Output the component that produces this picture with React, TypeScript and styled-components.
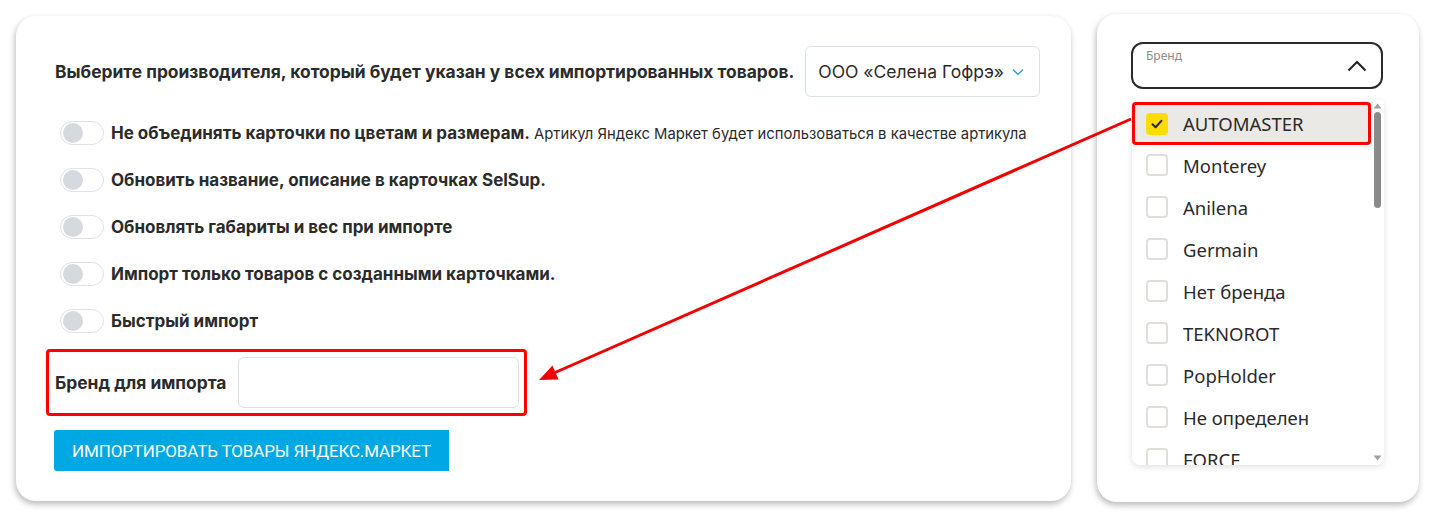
import React from 'react';
import styled, { createGlobalStyle } from 'styled-components';

const GlobalStyle = createGlobalStyle`
  html, body {
    margin: 0;
    padding: 0;
    background: #ffffff;
  }
  body {
    font-family: Inter, Roboto, "Liberation Sans", sans-serif;
    color: #222;
  }
`;

const Page = styled.div`
  position: relative;
  display: flex;
  align-items: flex-start;
  gap: 26px;
  padding: 16px 0 0 16px;
  width: 1439px;
  height: 523px;
  box-sizing: border-box;
`;

const Card = styled.div`
  background: #fff;
  border-radius: 20px;
  box-shadow: -1px 3px 6px rgba(0, 0, 0, 0.28);
  box-sizing: border-box;
`;

const ImportCard = styled(Card)`
  width: 1055px;
  height: 485px;
  padding: 30px 0 0 39px;
  display: flex;
  flex-direction: column;
`;

const BrandCard = styled(Card)`
  margin-top: -2px;
  width: 322px;
  height: 488px;
  padding: 28px 36px 0 34px;
  display: flex;
  flex-direction: column;
`;

const TitleRow = styled.div`
  display: flex;
  align-items: center;
  gap: 11px;
`;

const Title = styled.span`
  font-size: 17.4px;
  font-weight: 700;
  color: #2b2b2b;
  white-space: nowrap;
`;

const MakerSelect = styled.div`
  width: 235px;
  height: 51px;
  box-sizing: border-box;
  border: 1px solid #dce1e5;
  border-radius: 6px;
  display: flex;
  align-items: center;
  gap: 8px;
  padding: 0 12px;
  font-size: 17.5px;
  color: #2b2b2b;
  white-space: nowrap;
`;

const Options = styled.div`
  display: flex;
  flex-direction: column;
  gap: 23px;
  margin-top: 24px;
  padding-left: 5px;
`;

const OptionRow = styled.label`
  display: flex;
  align-items: center;
  gap: 7px;
  height: 24px;
`;

const Toggle = styled.span`
  position: relative;
  width: 44px;
  height: 24px;
  box-sizing: border-box;
  border: 1px solid #dfe3e7;
  border-radius: 12px;
  background: #fff;
  flex-shrink: 0;

  &::after {
    content: '';
    position: absolute;
    left: 2px;
    top: 1px;
    width: 20px;
    height: 20px;
    border-radius: 50%;
    background: #d6dadf;
  }
`;

const OptionText = styled.span<{ $size?: number }>`
  font-size: ${({ $size }) => $size ?? 17}px;
  font-weight: 700;
  color: #2b2b2b;
  white-space: nowrap;
`;

const OptionNote = styled.span`
  font-size: 14.8px;
  font-weight: 400;
  color: #2b2b2b;
  margin-left: 4px;
`;

const Highlight = styled.div`
  border: 3px solid #ff0000;
  border-radius: 4px;
  box-sizing: border-box;
`;

const BrandRow = styled(Highlight)`
  margin: 16px 0 0 -9px;
  width: 481px;
  height: 67px;
  display: flex;
  align-items: center;
  justify-content: space-between;
  padding: 0 5px 0 6px;
`;

const BrandInput = styled.div`
  width: 281px;
  height: 51px;
  box-sizing: border-box;
  border: 1px solid #dce1e5;
  border-radius: 6px;
`;

const ImportButton = styled.button`
  margin: 14px 0 0 -1px;
  width: 395px;
  height: 41px;
  border: none;
  border-radius: 3px 0 0 3px;
  background: #00a8e3;
  color: #fff;
  font-family: Roboto, "Liberation Sans", sans-serif;
  font-size: 17px;
  letter-spacing: -0.15px;
  text-transform: uppercase;
`;

const BrandSelect = styled.div`
  position: relative;
  height: 47px;
  box-sizing: border-box;
  border: 2px solid #2a2a2a;
  border-radius: 12px;
  font-family: "Noto Sans", sans-serif;
`;

const FloatingLabel = styled.span`
  position: absolute;
  left: 13px;
  top: 3px;
  font-size: 12px;
  color: #8c8c8c;
`;

const ChevronUp = styled.svg`
  position: absolute;
  right: 14px;
  top: 16px;
`;

const Dropdown = styled.div`
  margin: 11px -1px 0 1px;
  height: 365px;
  display: flex;
  background: #fff;
  border-radius: 0 0 8px 8px;
  box-shadow: 0 2px 6px rgba(0, 0, 0, 0.12);
  overflow: hidden;
  font-family: "Noto Sans", sans-serif;
`;

const ItemList = styled.div`
  flex: 1;
  padding-top: 2px;
  overflow: hidden;
`;

const Item = styled.div`
  height: 42px;
  box-sizing: border-box;
  display: flex;
  align-items: center;
  gap: 15px;
  padding-left: 14px;
  padding-bottom: 2px;
  font-size: 18.5px;
  color: #2a2a2a;
`;

const ActiveItem = styled(Highlight)`
  padding-left: 11px;
  height: 43px;
  display: flex;
  align-items: center;
  gap: 15px;
  background: #ebe9e5;
  font-size: 18.5px;
  color: #2a2a2a;
`;

const Check = styled.span<{ $checked?: boolean }>`
  width: 22px;
  height: 22px;
  box-sizing: border-box;
  border-radius: 4px;
  border: ${({ $checked }) => ($checked ? 'none' : '2px solid #e2dfda')};
  background: ${({ $checked }) => ($checked ? '#ffdd00' : '#fff')};
  display: flex;
  align-items: center;
  justify-content: center;
  flex-shrink: 0;
`;

const Scrollbar = styled.div`
  width: 13px;
  display: flex;
  flex-direction: column;
  align-items: center;
  padding-top: 3px;
`;

const Thumb = styled.div`
  margin-top: 3px;
  width: 7px;
  height: 96px;
  border-radius: 4px;
  background: #8b8b8b;
`;

const Spacer = styled.div`
  flex: 1;
`;

const Overlay = styled.svg`
  position: absolute;
  left: 0;
  top: 0;
  pointer-events: none;
`;

const options = [
  { title: 'Не объединять карточки по цветам и размерам.', note: 'Артикул Яндекс Маркет будет использоваться в качестве артикула' },
  { title: 'Обновить название, описание в карточках SelSup.' },
  { title: 'Обновлять габариты и вес при импорте' },
  { title: 'Импорт только товаров с созданными карточками.' },
  { title: 'Быстрый импорт' },
];

const brands = ['Monterey', 'Anilena', 'Germain', 'Нет бренда', 'TEKNOROT', 'PopHolder', 'Не определен', 'FORCE'];

const Tick = () => (
  <svg width="12" height="10" viewBox="0 0 12 10">
    <path d="M1.5 5.2 L4.6 8.2 L10.5 1.8" fill="none" stroke="#2a2a35" strokeWidth="2" strokeLinecap="round" strokeLinejoin="round" />
  </svg>
);

const App = () => {
  return (
    <>
      <GlobalStyle />
      <Page>
        <ImportCard>
          <TitleRow>
            <Title>Выберите производителя, который будет указан у всех импортированных товаров.</Title>
            <MakerSelect>
              ООО «Селена Гофрэ»
              <svg width="12" height="8" viewBox="0 0 12 8">
                <path d="M1 1.5 L6 6.5 L11 1.5" fill="none" stroke="#3d9ad8" strokeWidth="1.3" />
              </svg>
            </MakerSelect>
          </TitleRow>

          <Options>
            {options.map((opt) => (
              <OptionRow key={opt.title}>
                <Toggle />
                <OptionText>
                  {opt.title}
                  {opt.note && <OptionNote>{opt.note}</OptionNote>}
                </OptionText>
              </OptionRow>
            ))}
          </Options>

          <BrandRow>
            <OptionText $size={17.4}>Бренд для импорта</OptionText>
            <BrandInput />
          </BrandRow>

          <div>
            <ImportButton>Импортировать товары Яндекс.Маркет</ImportButton>
          </div>
        </ImportCard>

        <BrandCard>
          <BrandSelect>
            <FloatingLabel>Бренд</FloatingLabel>
            <ChevronUp width="20" height="12" viewBox="0 0 20 12">
              <path d="M1.5 10.5 L10 2 L18.5 10.5" fill="none" stroke="#222" strokeWidth="2" />
            </ChevronUp>
          </BrandSelect>

          <Dropdown>
            <ItemList>
              <ActiveItem>
                <Check $checked>
                  <Tick />
                </Check>
                AUTOMASTER
              </ActiveItem>
              {brands.map((b) => (
                <Item key={b}>
                  <Check />
                  {b}
                </Item>
              ))}
            </ItemList>
            <Scrollbar>
              <svg width="9" height="6" viewBox="0 0 9 6">
                <path d="M0.5 5.5 L4.5 0.5 L8.5 5.5 Z" fill="#a0a0a0" />
              </svg>
              <Thumb />
              <Spacer />
              <svg width="9" height="6" viewBox="0 0 9 6" style={{ marginBottom: 4 }}>
                <path d="M0.5 0.5 L4.5 5.5 L8.5 0.5 Z" fill="#a0a0a0" />
              </svg>
            </Scrollbar>
          </Dropdown>
        </BrandCard>

        <Overlay width="1439" height="523" viewBox="0 0 1439 523">
          <line x1="1131" y1="119" x2="554" y2="373" stroke="#f20000" strokeWidth="3" />
          <path d="M539 380 L558.5 379.5 L552.5 365.5 Z" fill="#f20000" />
        </Overlay>
      </Page>
    </>
  );
};

export default App;
